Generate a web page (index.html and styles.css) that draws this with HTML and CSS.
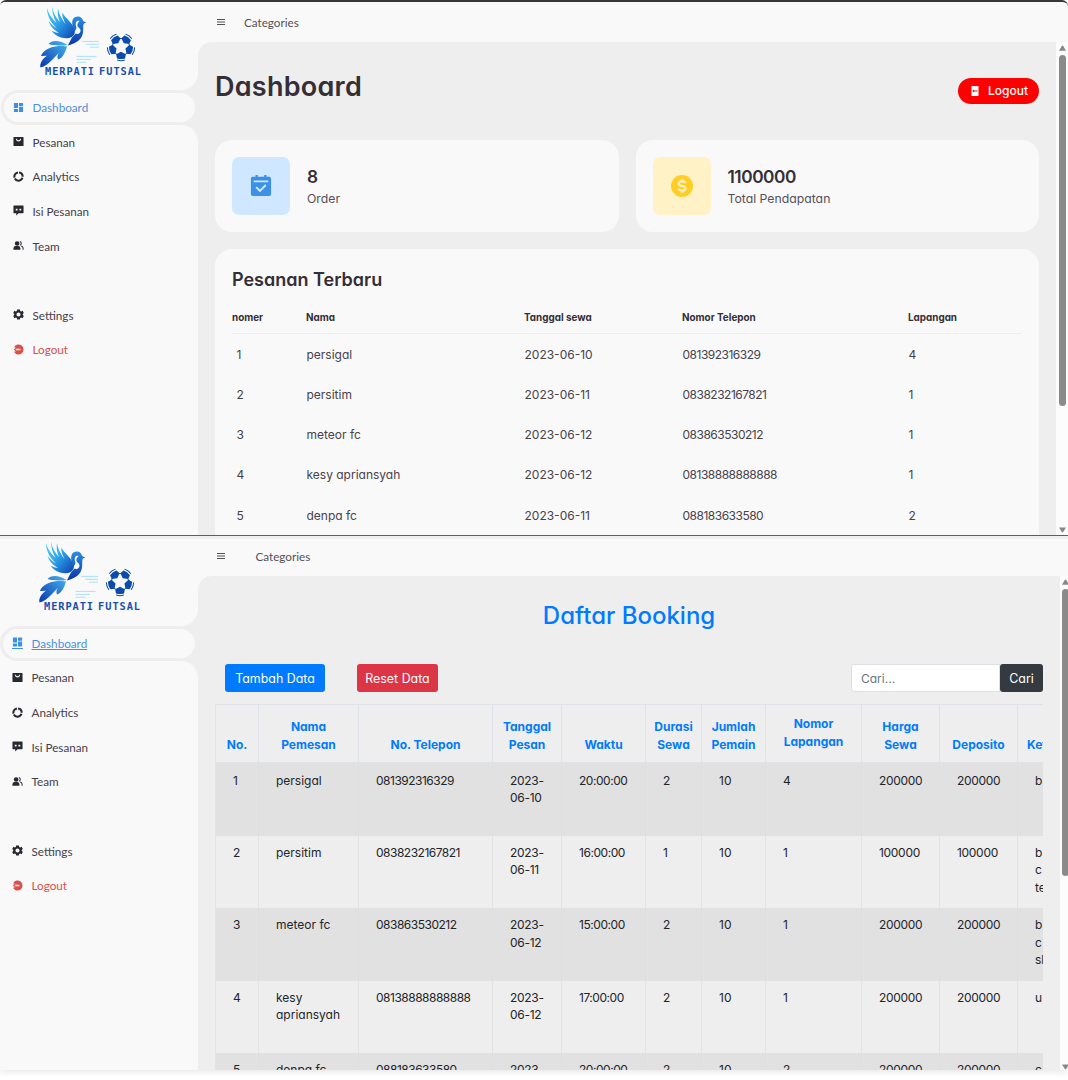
FILE: index.html
```html
<!DOCTYPE html>
<html lang="id">
<head>
<meta charset="utf-8">
<title>Merpati Futsal</title>
<link rel="stylesheet" href="styles.css">
</head>
<body>
<svg class="sprite" width="0" height="0" aria-hidden="true">
  <defs>
    <linearGradient id="wing" x1="0" y1="0" x2="1" y2="1"><stop offset="0" stop-color="#43d6fb"/><stop offset=".45" stop-color="#2fa9ec"/><stop offset="1" stop-color="#0b3fb0"/></linearGradient>
    <linearGradient id="body" x1="0" y1="0" x2="0" y2="1"><stop offset="0" stop-color="#2a8fe0"/><stop offset="1" stop-color="#0a35a8"/></linearGradient>
    <linearGradient id="tail" x1="1" y1="0" x2="0" y2="1"><stop offset="0" stop-color="#45b8f0"/><stop offset="1" stop-color="#0a36ac"/></linearGradient>
    <symbol id="logo" viewBox="38 2 106 76">
      <path fill="url(#wing)" d="M52.3 4.3C51.8 10 54.500 16 60 22C57.500 16 57.500 12 58 8C59 15 62 19 65.500 24C63 19 62 16 62.300 12.500C65 18 72 22 74.500 29C76 34 73 37 69 38C62 39 55 36 51.500 30.500C54 32 57 33 59 33C54 30 50 26 48.500 21C51 24 54 27 57 28.500C51 23 47 16 47 8C48.500 14 52 19 56.500 23C53 17 51.500 10 52.300 4.300Z"/>
      <path fill="url(#body)" d="M73.500 29C70.500 21 73 16.500 78 16.500C81 16.500 82 18.500 83 20.500C84 21.500 85 22 86.500 22.700C84 23 83.500 23.800 83.300 25.500C83 32 84 36 78 41C75 43.500 71 44.500 68 45.500C69 43 70 41 72 37.500C74 35 75 34 76 33.500C78 35 81 33 80.500 30C80 28 78 27.500 77.500 26C77 23 79 22 79.500 21C77 20 75 22.500 76 26C77 28 76 30 74 32Z"/>
      <path fill="url(#tail)" d="M67.500 45C60 40 52 40 48.500 44C55 46 61 45.500 67.500 45ZM66 45.800C54 45 43 49 41 56C50 57 57 51 66 45.800ZM66.500 46C53 51 39 58 40.500 67.500C49 66 56 54 66.500 46ZM67 46C60 50 56 55 58 59.500C63 58 66 51 67 46Z"/>
      <path fill="none" stroke="#9fdff7" stroke-width=".9" d="M82 41.400H99M86 44.300H99M90 47.200H99M76.500 56.400H96.500M76.500 59.400H91M76.500 62.300H86.500"/>
      <g fill="#0b4bae">
        <g id="patch"><path d="M121 51.700L125.800 54.300L125 58.400Q121 59.700 117 58.400L116.200 54.300Z"/><path d="M117.200 59.600Q121 60.700 124.800 59.600L124.900 60.600Q121 61.900 117.100 60.600Z"/><path d="M116.600 54.800L113.600 52.900L114.100 52.200L117 54Z"/></g>
        <use href="#patch" transform="rotate(72 121 47)"/><use href="#patch" transform="rotate(144 121 47)"/><use href="#patch" transform="rotate(216 121 47)"/><use href="#patch" transform="rotate(288 121 47)"/>
      </g>
      <text class="logo-name" x="45" y="74.700" textLength="96" lengthAdjust="spacing">MERPATI FUTSAL</text>
    </symbol>
    <symbol id="i-dash" viewBox="0 0 24 24"><path d="M2 2h9v11H2zM13 2h9v7h-9zM2 15h9v7H2zM13 11h9v11h-9z"/></symbol>
    <symbol id="i-bag" viewBox="0 0 24 24"><path fill-rule="evenodd" d="M2 2h20q1 0 1 1v18q0 1-1 1H2q-1 0-1-1V3q0-1 1-1zM6 6q1 6 6 6t6-6h-2.500q-.5 3.500-3.500 3.500T8.500 6z"/></symbol>
    <symbol id="i-ring" viewBox="0 0 24 24"><path fill="none" stroke="currentColor" stroke-width="4.500" d="M13.200 3.100A9 9 0 0 1 21 12.500M20.600 14.800A9 9 0 0 1 4 16.200M3.400 14.500A9 9 0 0 1 10.800 3.100"/></symbol>
    <symbol id="i-chat" viewBox="0 0 24 24"><path fill-rule="evenodd" d="M2 1h20q1 0 1 1v15q0 1-1 1H12l-5 5v-5H2q-1 0-1-1V2q0-1 1-1zM6 8v4h4V8zM14 8v4h4V8z"/></symbol>
    <symbol id="i-team" viewBox="0 0 24 24"><path d="M1 21v-3q0-5 5-5h5q5 0 5 5v3z"/><circle cx="9" cy="7.500" r="5"/><path fill="none" stroke="currentColor" stroke-width="2.200" d="M15 3.500c4 1 4 7 0 8M18 13q4 1 4 5v3"/></symbol>
    <symbol id="i-gear" viewBox="0 0 24 24"><path fill-rule="evenodd" d="M9 1h6l.7 3.200 2 1.100L21 4l2.500 4.500L21.300 11v2l2.200 2.500L21 20l-3.300-1.200-2 1.100L15 23H9l-.7-3.100-2-1.100L3 20 .5 15.500 2.700 13v-2L.5 8.500 3 4l3.300 1.300 2-1.100zM12 7.500a4.500 4.500 0 1 0 0 9 4.500 4.500 0 0 0 0-9z"/></symbol>
    <symbol id="i-out" viewBox="0 0 24 24"><path fill-rule="evenodd" d="M2.200 7A11 11 0 1 1 2.200 17L6 17l-4-5 4-5zM6 10.500v3h10v-3z"/></symbol>
    <symbol id="i-menu" viewBox="0 0 10 10"><path fill="none" stroke="currentColor" d="M1 2.500h8M1 5h8M1 7.500h8"/></symbol>
    <symbol id="i-cal" viewBox="0 0 24 24"><path fill-rule="evenodd" d="M6 0h2.500v2h7V0H18v2h3q2 0 2 2v17q0 2-2 2H3q-2 0-2-2V4q0-2 2-2h3zM4 6v2h16V6zM7.500 12.500 6 14l4.800 4.800L18 11.700l-1.500-1.500-5.700 5.600z"/></symbol>
    <symbol id="i-coin" viewBox="0 0 24 24"><circle cx="12" cy="12" r="12"/><path fill="none" stroke="#fff2c6" stroke-width="2.300" d="M16 8.700Q15 7 12 7 8.500 7 8.500 9.500 8.500 11.500 12 12t3.800 2.600Q15.800 17 12 17 9 17 8 15M12 4.500V7M12 17v2.500"/></symbol>
    <symbol id="i-door" viewBox="0 0 16 20"><path fill-rule="evenodd" d="M1 0h14v20H1zM9 8.900H6V7L2.500 10 6 13v-1.900h7V8.900z"/></symbol>
    <symbol id="i-up" viewBox="0 0 8 6"><path d="M0 6 3 1q1-1.500 2 0l3 5z"/></symbol>
  </defs>
</svg>

<section class="window first">
  <aside class="sidebar">
    <div class="brand"><svg class="logo"><use href="#logo"/></svg></div>
    <div class="notch"><div class="cutout"><a class="item active"><svg class="ico"><use href="#i-dash"/></svg><span>Dashboard</span></a></div></div>
    <nav class="menu">
      <a class="item"><svg class="ico"><use href="#i-bag"/></svg><span>Pesanan</span></a>
      <a class="item"><svg class="ico"><use href="#i-ring"/></svg><span>Analytics</span></a>
      <a class="item"><svg class="ico"><use href="#i-chat"/></svg><span>Isi Pesanan</span></a>
      <a class="item"><svg class="ico"><use href="#i-team"/></svg><span>Team</span></a>
      <a class="item spaced"><svg class="ico"><use href="#i-gear"/></svg><span>Settings</span></a>
      <a class="item exit"><svg class="ico"><use href="#i-out"/></svg><span>Logout</span></a>
    </nav>
  </aside>
  <div class="content">
    <header class="topbar"><svg class="burger"><use href="#i-menu"/></svg><span>Categories</span></header>
    <div class="viewport">
      <main class="main">
        <div class="head"><h1>Dashboard</h1><a class="logout"><svg class="door"><use href="#i-door"/></svg><span>Logout</span></a></div>
        <div class="cards">
          <div class="card"><div class="badge blue"><svg><use href="#i-cal"/></svg></div><div class="stat"><b>8</b><span class="order">Order</span></div></div>
          <div class="card"><div class="badge yellow"><svg><use href="#i-coin"/></svg></div><div class="stat"><b class="sum">1100000</b><span>Total Pendapatan</span></div></div>
        </div>
        <div class="latest">
          <h2>Pesanan Terbaru</h2>
          <table class="orders">
            <colgroup><col class="o1"><col class="o2"><col class="o3"><col class="o4"><col></colgroup>
            <thead><tr><th>nomer</th><th>Nama</th><th>Tanggal sewa</th><th>Nomor Telepon</th><th>Lapangan</th></tr></thead>
            <tbody>
              <tr><td>1</td><td>persigal</td><td>2023-06-10</td><td class="tel">081392316329</td><td>4</td></tr>
              <tr><td>2</td><td>persitim</td><td>2023-06-11</td><td class="tel">0838232167821</td><td>1</td></tr>
              <tr><td>3</td><td>meteor fc</td><td>2023-06-12</td><td class="tel">083863530212</td><td>1</td></tr>
              <tr><td>4</td><td>kesy apriansyah</td><td>2023-06-12</td><td class="tel">08138888888888</td><td>1</td></tr>
              <tr><td>5</td><td>denpa fc</td><td>2023-06-11</td><td class="tel">088183633580</td><td>2</td></tr>
            </tbody>
          </table>
        </div>
      </main>
      <div class="scroll"><svg class="arrow"><use href="#i-up"/></svg><div class="thumb"></div><svg class="arrow down"><use href="#i-up"/></svg></div>
    </div>
  </div>
</section>

<section class="window second">
  <aside class="sidebar">
    <div class="brand"><svg class="logo"><use href="#logo"/></svg></div>
    <div class="notch"><div class="cutout"><a class="item active"><svg class="ico"><use href="#i-dash"/></svg><span>Dashboard</span></a></div></div>
    <nav class="menu">
      <a class="item"><svg class="ico"><use href="#i-bag"/></svg><span>Pesanan</span></a>
      <a class="item"><svg class="ico"><use href="#i-ring"/></svg><span>Analytics</span></a>
      <a class="item"><svg class="ico"><use href="#i-chat"/></svg><span>Isi Pesanan</span></a>
      <a class="item"><svg class="ico"><use href="#i-team"/></svg><span>Team</span></a>
      <a class="item spaced"><svg class="ico"><use href="#i-gear"/></svg><span>Settings</span></a>
      <a class="item exit"><svg class="ico"><use href="#i-out"/></svg><span>Logout</span></a>
    </nav>
  </aside>
  <div class="content">
    <header class="topbar"><svg class="burger"><use href="#i-menu"/></svg><span>Categories</span></header>
    <div class="viewport">
      <main class="main">
        <h2 class="title">Daftar Booking</h2>
        <div class="tools">
          <button class="btn add">Tambah Data</button><button class="btn reset">Reset Data</button>
          <form class="search"><input type="text" placeholder="Cari..."><button class="btn find" type="button">Cari</button></form>
        </div>
        <div class="clip">
          <table class="booking">
            <colgroup><col class="c1"><col class="c2"><col class="c3"><col class="c4"><col class="c5"><col class="c6"><col class="c7"><col class="c8"><col class="c9"><col class="c10"><col class="c11"></colgroup>
            <thead><tr><th>No.</th><th>Nama<br>Pemesan</th><th>No. Telepon</th><th>Tanggal<br>Pesan</th><th>Waktu</th><th>Durasi<br>Sewa</th><th>Jumlah<br>Pemain</th><th class="raised">Nomor<br>Lapangan</th><th>Harga<br>Sewa</th><th>Deposito</th><th class="ket">Ket</th></tr></thead>
            <tbody>
              <tr><td>1</td><td>persigal</td><td class="tel">081392316329</td><td class="date">2023-<br>06-10</td><td class="time">20:00:00</td><td>2</td><td>10</td><td>4</td><td class="money">200000</td><td class="money">200000</td><td>b</td></tr>
              <tr><td>2</td><td>persitim</td><td class="tel">0838232167821</td><td class="date">2023-<br>06-11</td><td class="time">16:00:00</td><td>1</td><td>10</td><td>1</td><td class="money">100000</td><td class="money">100000</td><td>b<br>c<br>te</td></tr>
              <tr><td>3</td><td>meteor fc</td><td class="tel">083863530212</td><td class="date">2023-<br>06-12</td><td class="time">15:00:00</td><td>2</td><td>10</td><td>1</td><td class="money">200000</td><td class="money">200000</td><td>b<br>c<br>sl</td></tr>
              <tr><td>4</td><td>kesy<br>apriansyah</td><td class="tel">08138888888888</td><td class="date">2023-<br>06-12</td><td class="time">17:00:00</td><td>2</td><td>10</td><td>1</td><td class="money">200000</td><td class="money">200000</td><td>u</td></tr>
              <tr><td>5</td><td>denpa fc</td><td class="tel">088183633580</td><td class="date">2023-<br>06-11</td><td class="time">20:00:00</td><td>2</td><td>10</td><td>2</td><td class="money">200000</td><td class="money">200000</td><td>c</td></tr>
            </tbody>
          </table>
        </div>
      </main>
      <div class="scroll"><svg class="arrow"><use href="#i-up"/></svg><div class="thumb"></div><svg class="arrow down"><use href="#i-up"/></svg></div>
    </div>
  </div>
</section>
</body>
</html>
```
FILE: styles.css
```css
* { box-sizing: border-box; }
body {
  margin: 0;
  height: 1080px;
  overflow: hidden;
  background: #fff;
  color: #342e37;
  font-family: Inter, "Open Sans", sans-serif;
  font-feature-settings: "cv11";
  font-size: 12px;
}
h1, h2 { margin: 0; }
svg { display: block; fill: currentColor; flex: none; }
.sprite { position: absolute; }

.window { display: grid; grid-template-columns: 198px 1fr; overflow: hidden; background: #f9f9f9; }
.first { height: 536px; border-top: 2px solid #3a363b; border-bottom: 1px solid #60635f; border-radius: 6px 6px 0 0; }
.second { height: 534px; border-top: 3px solid #efefef; box-shadow: 0 2px 7px rgba(0, 0, 0, .1); }

/* sidebar */
.sidebar { display: flex; flex-direction: column; background: #eee; font-family: Lato, sans-serif; }
.brand { height: 88px; background: #f9f9f9; border-radius: 0 0 17px 0; padding: 0 0 0 38px; }
.second .brand { height: 87px; padding-left: 37px; }
.second .logo { margin-top: -2px; }
.logo { width: 106px; height: 76px; }
.logo-name { font: 700 10.300px "DejaVu Sans Mono", monospace; fill: #1550b0; word-spacing: -3px; }
.notch { height: 35px; background: linear-gradient(to right, #f9f9f9 50%, #eee 50%); padding-left: 1px; }
.second .notch { padding-left: 0; }
.cutout { height: 35px; background: #eee; border-radius: 17px 0 0 17px; padding: 3px; }
.item { display: flex; align-items: center; height: 34.600px; padding: 0 0 1px 12.500px; color: #45404a; font-size: 11.700px; }
.item span { padding-left: 9px; }
.ico { width: 11px; height: 11px; color: #2b2630; }
.active { height: 29px; background: #f9f9f9; border-radius: 15px; padding-left: 8.500px; color: #4a90e2; }
.active .ico { color: #3c91e6; }
.menu { flex: 1; background: #f9f9f9; border-radius: 0 17px 0 0; }
.spaced { margin-top: 34.600px; }
.exit, .exit .ico { color: #db504a; }
.second .item { padding-left: 11.500px; padding-bottom: 2px; height: 34.700px; }
.second .active { padding-left: 8.500px; height: 29px; text-decoration: underline; }
.second .active .ico { border-bottom: 1px solid #3c91e6; height: 13px; }

/* content */
.content { display: flex; flex-direction: column; min-width: 0; min-height: 0; }
.topbar { display: flex; align-items: center; height: 40px; padding: 0 0 1px 18px; font: 11.700px Lato, sans-serif; color: #555058; flex: none; }
.topbar span { padding-left: 18px; }
.second .topbar { height: 37px; padding-bottom: 4px; }
.second .topbar span { padding-left: 29.500px; }
.burger { width: 10px; height: 10px; }
.viewport { display: flex; flex: 1; min-height: 0; }
.main { flex: 1; min-width: 0; background: #eee; border-radius: 14px 0 0 0; padding: 0 17px; overflow: hidden; }
.scroll { display: flex; flex-direction: column; align-items: center; width: 12px; padding-top: 3px; background: #fcfcfc; color: #888; overflow: hidden; }
.arrow { width: 7px; height: 6px; }
.down { transform: rotate(180deg); margin: auto 0 2px; }
.thumb { width: 7px; height: 351px; margin-top: 4px; border-radius: 4px; background: #8a8a8a; flex: none; }
.second .scroll { width: 8px; align-items: flex-start; padding-left: 2px; }
.second .thumb { height: 287px; }
.second .down { margin-bottom: 0; }

/* dashboard */
.head { display: flex; align-items: center; justify-content: space-between; height: 98px; }
.head h1 { font-size: 27px; line-height: 40px; font-weight: 600; padding-bottom: 8px; letter-spacing: .25px; }
.logout { display: flex; align-items: center; gap: 9px; width: 81px; height: 26px; padding: 0 0 1px 13px; border-radius: 13px; background: #f00; color: #fff; font-size: 12px; font-weight: 500; }
.door { width: 8px; height: 10px; }
.cards { display: grid; grid-template-columns: 1fr 1fr; gap: 17px; }
.card { display: flex; align-items: center; gap: 17px; height: 92px; padding: 17px; background: #f9f9f9; border-radius: 17px; }
.badge { display: grid; place-items: center; width: 58px; height: 58px; border-radius: 7px; }
.badge svg { width: 22px; height: 22px; }
.blue { background: #cfe8ff; color: #3c91e6; }
.yellow { background: #fff2c6; color: #ffce26; }
.stat { display: flex; flex-direction: column; }
.stat b { font-size: 17.300px; line-height: 25px; font-weight: 600; }
.stat .sum { letter-spacing: -.45px; }
.stat span { line-height: 19px; color: #55505a; font-size: 12.250px; }
.latest { margin-top: 17px; height: 400px; padding: 18px 17px; background: #f9f9f9; border-radius: 17px; }
.latest h2 { font-size: 18px; line-height: 26px; font-weight: 600; }
table { border-collapse: separate; border-spacing: 0; table-layout: fixed; }
.orders { width: 790px; margin-top: 14px; }
.o1 { width: 74px; } .o2 { width: 218px; } .o3 { width: 158px; } .o4 { width: 226px; }
.orders th { padding: 0; height: 27px; vertical-align: top; text-align: left; font-size: 9.900px; line-height: 21px; border-bottom: 1px solid #eee; }
.orders td { padding: 0 0 0 .5px; height: 40.250px; color: #47424b; }
.orders td:first-child { padding-left: 4.500px; }
.tel { letter-spacing: -.5px; }

/* booking */
.second .main { color: #212529; }
.title { height: 79px; text-align: center; color: #007bff; font-size: 24px; line-height: 79px; font-weight: 500; }
.tools { display: flex; align-items: flex-start; height: 49px; padding: 9px 0 0 10px; }
.btn { height: 28px; padding: 0; border: 0; border-radius: 3px; color: #fff; font: 12.400px Inter, sans-serif; font-feature-settings: "cv11"; }
.add { width: 100px; background: #007bff; }
.reset { width: 81px; margin-left: 32px; background: #dc3545; }
.search { display: flex; margin-left: auto; }
.search input { width: 149px; height: 28px; padding: 0 9px; border: 1px solid #dcdfe3; border-radius: 3px 0 0 3px; font: inherit; background: #fff; outline: 0; }
.search input::placeholder { color: #6c757d; }
.find { width: 43px; background: #343a40; }
.clip { overflow: hidden; }
.booking { width: 876px; border-left: 1px solid #e0e3e7; }
.c1 { width: 43px; } .c2 { width: 100px; } .c3 { width: 134px; } .c4 { width: 69px; } .c5 { width: 84px; }
.c6 { width: 56px; } .c7 { width: 64px; } .c8 { width: 96px; } .c9 { width: 78px; } .c10 { width: 78px; } .c11 { width: 73px; }
.booking th { height: 60px; padding: 0 0 9px; vertical-align: bottom; line-height: 17.300px; font-weight: 700; color: #007bff; border: solid #dfe3e7; border-width: 1px 1px 2px 0; white-space: nowrap; }
.booking th.raised { padding-bottom: 12px; }
.booking th.ket { text-align: left; padding-left: 9px; }
.booking td { height: 72.200px; padding: 8px 0 0 17px; vertical-align: top; line-height: 17.300px; border-right: 1px solid #e0e3e6; white-space: nowrap; }
.booking .date, .booking .money { letter-spacing: -.3px; }
.booking .time { letter-spacing: -.45px; }
.booking tbody tr:nth-child(odd) { background: #e1e1e1; }
.booking tbody tr:nth-child(odd) td { border-right-color: #dedfe0; }
```
